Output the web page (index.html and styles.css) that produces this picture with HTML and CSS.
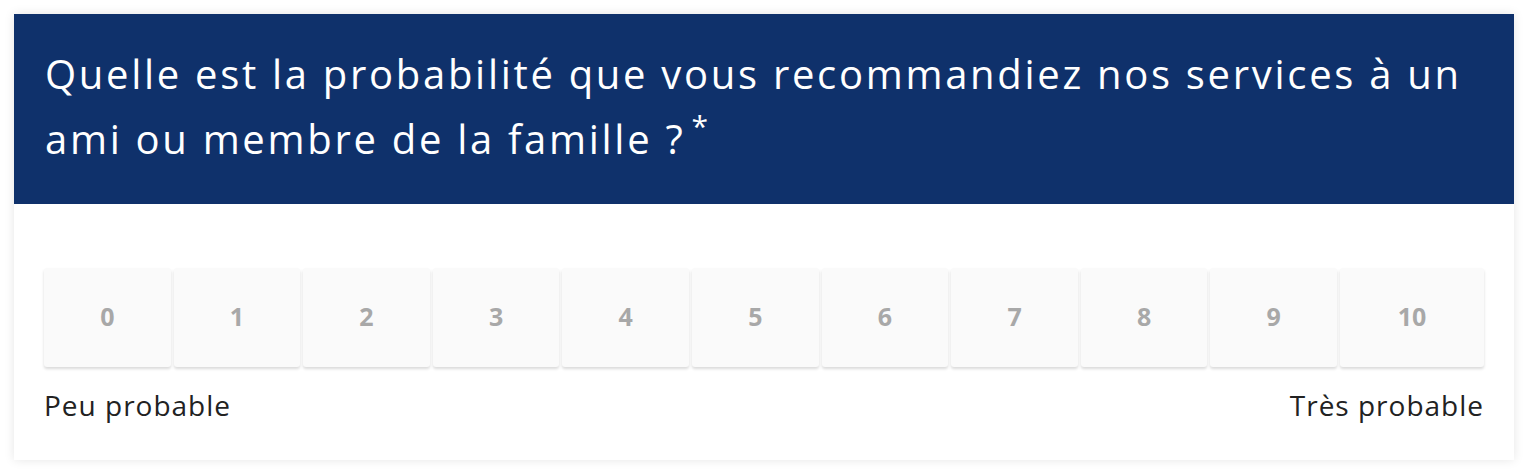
FILE: index.html
```html
<!DOCTYPE html>
<html lang="fr">
<head>
    <meta charset="UTF-8">
    <meta name="viewport" content="width=device-width, initial-scale=1.0">
    <title>Recommandation</title>
    <link rel="stylesheet" href="styles.css">
</head>
<body>
    <div class="question">
        <div class="question-title">
            Quelle est la probabilité que vous recommandiez nos services à un ami ou membre de la famille ?<span class="required">*</span>
        </div>

        <div class="question-body">
            <div class="scale">
                <button class="score">0</button>
                <button class="score">1</button>
                <button class="score">2</button>
                <button class="score">3</button>
                <button class="score">4</button>
                <button class="score">5</button>
                <button class="score">6</button>
                <button class="score">7</button>
                <button class="score">8</button>
                <button class="score">9</button>
                <button class="score">10</button>
            </div>
            <div class="scale-labels">
                <span>Peu probable</span>
                <span>Très probable</span>
            </div>
        </div>
    </div>
</body>
</html>
```

FILE: styles.css
```css
body {
    margin: 0;
    padding: 14px;
    background: #fff;
    font-family: "Open Sans", Arial, sans-serif;
}
.question {
    background: white;
    box-shadow: 0 0 10px rgba(0,0,0,0.1);
}
.question-title {
    background: #0f316b;
    color: white;
    font-size: 40px;
    letter-spacing: 2.7px;
    line-height: 65px;
    padding: 27px 31px 33px;
    height: 130px;
}
.required {
    font-size: 30px;
    line-height: 0;
    vertical-align: 17px;
    margin-left: 6px;
}
.question-body {
    padding: 64px 30px 37px;
}
/* last box is a little wider, room for the two digits */
.scale {
    display: grid;
    grid-template-columns: repeat(10, 1fr) 1.137fr;
    gap: 3px;
}
.score {
    height: 99px;
    padding: 0 0 4px;
    border: none;
    border-radius: 3px;
    background: #fafafa;
    box-shadow: 0 2px 3px rgba(0,0,0,0.15);
    color: #a8a8a8;
    font-family: inherit;
    font-size: 25px;
    font-weight: bold;
    cursor: pointer;
}
.score:hover {
    background: #f0f0f0;
}
.scale-labels {
    display: flex;
    justify-content: space-between;
    margin-top: 20px;
    font-size: 28px;
    letter-spacing: 1px;
    line-height: 36px;
    color: #222;
}
```
